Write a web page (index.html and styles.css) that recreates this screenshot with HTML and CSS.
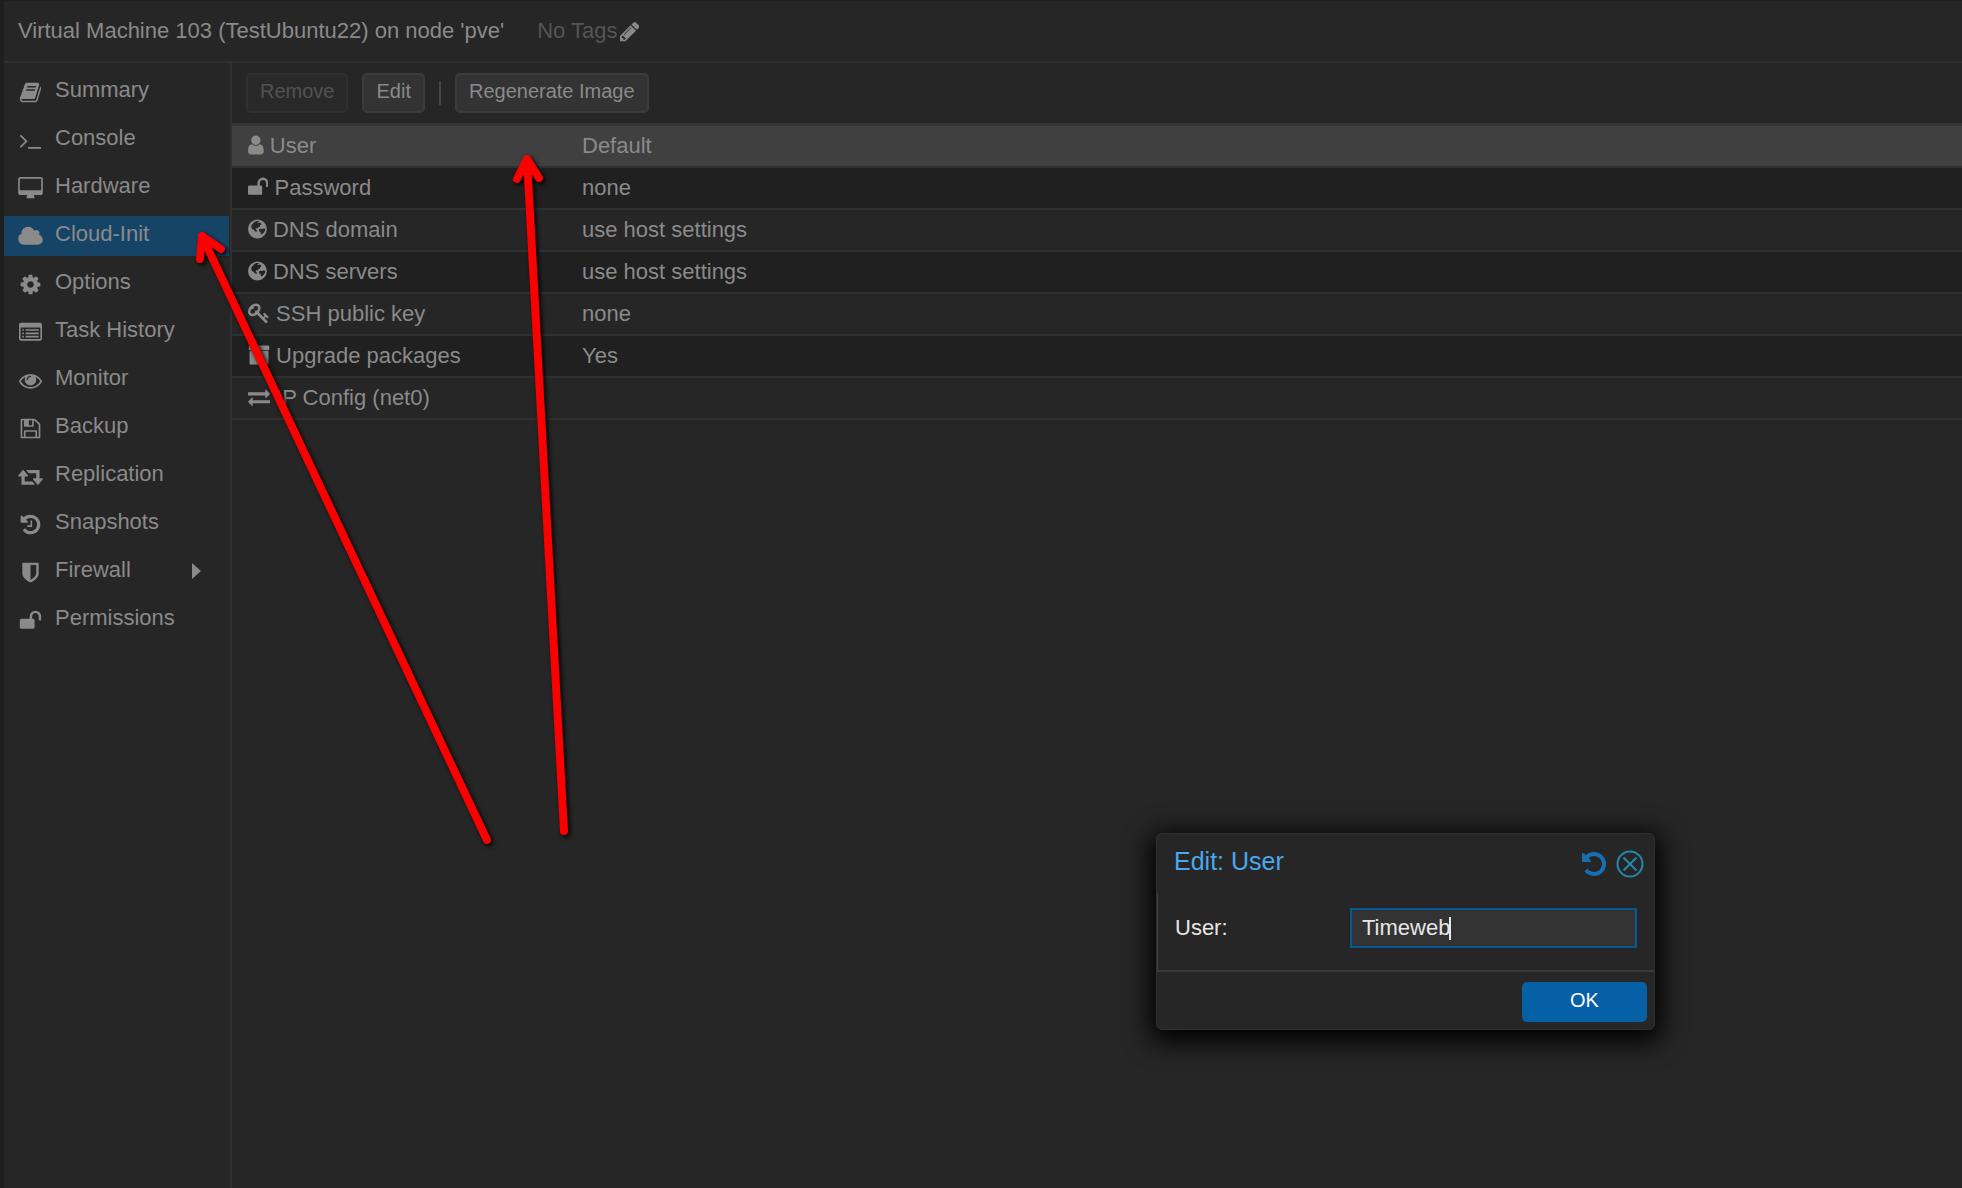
FILE: index.html
```html
<!DOCTYPE html>
<html lang="en">
<head>
    <meta charset="UTF-8">
    <meta name="viewport" content="width=device-width, initial-scale=1.0">
    <title>Virtual Machine 103 - Cloud-Init</title>
    <link rel="stylesheet" href="styles.css">
</head>
<body>
    <div class="panel">
        <header class="titlebar">
            <h1 class="vm-title">Virtual Machine 103 (TestUbuntu22) on node 'pve'</h1>
            <span class="tags">No Tags</span>
            <button class="tag-edit" aria-label="Edit tags">
                <svg class="icon" viewBox="128 0 1536 1792"><path d="M491 1536l91-91-235-235-91 91v107h128v128h107zm523-928q0-22-22-22-10 0-17 7l-542 542q-7 7-7 17 0 22 22 22 10 0 17-7l542-542q7-7 7-17zm-54-192l416 416-832 832h-416v-416zm683 96q0 53-37 90l-166 166-416-416 166-165q36-38 90-38 53 0 91 38l235 234q37 39 37 91z"/></svg>
            </button>
        </header>

        <div class="body">
            <!-- VM navigation -->
            <nav class="sidebar">
                <a class="nav-item" href="#summary">
                    <svg class="icon" viewBox="0 0 1792 1792"><path d="M1703 478q40 57 18 129l-275 906q-19 64-76.5 107.5t-122.5 43.5h-923q-77 0-148.5-53.5t-99.5-131.5q-24-67-2-127 0-4 3-27t4-37q1-8-3-21.5t-3-19.5q2-11 8-21t16.5-23.5 16.5-23.5q23-38 45-91.5t30-91.5q3-10 .5-30t-.5-28q3-11 17-28t17-23q21-36 42-92t25-90q1-9-2.5-32t.5-28q4-13 22-30.5t22-22.5q19-26 42.5-84.5t27.5-96.5q1-8-3-25.5t-2-26.5q2-8 9-18t18-23 17-21q8-12 16.5-30.5t15-35 16-36 19.5-32 26.5-23.5 36-11.5 47.5 5.5l-1 3q38-9 51-9h761q74 0 114 56t18 130l-274 906q-36 119-71.5 153.5t-128.5 34.5h-869q-27 0-38 15-11 16-1 43 24 70 144 70h923q29 0 56-15.5t35-41.5l300-987q7-22 5-57 38 15 59 43zm-1064 2q-4 13 2 22.5t20 9.5h608q13 0 25.5-9.5t16.5-22.5l21-64q4-13-2-22.5t-20-9.5h-608q-13 0-25.5 9.5t-16.5 22.5zm-83 256q-4 13 2 22.5t20 9.5h608q13 0 25.5-9.5t16.5-22.5l21-64q4-13-2-22.5t-20-9.5h-608q-13 0-25.5 9.5t-16.5 22.5z"/></svg>
                    <span>Summary</span>
                </a>
                <a class="nav-item" href="#console">
                    <svg class="icon" viewBox="0 0 1792 1792"><path d="M649 983l-466 466q-10 10-23 10t-23-10l-50-50q-10-10-10-23t10-23l393-393-393-393q-10-10-10-23t10-23l50-50q10-10 23-10t23 10l466 466q10 10 10 23t-10 23zm1079 457v64q0 14-9 23t-23 9h-960q-14 0-23-9t-9-23v-64q0-14 9-23t23-9h960q14 0 23 9t9 23z"/></svg>
                    <span>Console</span>
                </a>
                <a class="nav-item" href="#hardware">
                    <svg class="icon" viewBox="-64 0 1920 1792"><path d="M1728 992v-832q0-13-9.5-22.5t-22.5-9.5h-1600q-13 0-22.5 9.5t-9.5 22.5v832q0 13 9.5 22.5t22.5 9.5h1600q13 0 22.5-9.5t9.5-22.5zm128-832v1088q0 66-47 113t-113 47h-544q0 37 16 77.5t32 71 16 43.5q0 26-19 45t-45 19h-512q-26 0-45-19t-19-45q0-14 16-44t32-70 16-78h-544q-66 0-113-47t-47-113v-1088q0-66 47-113t113-47h1600q66 0 113 47t47 113z"/></svg>
                    <span>Hardware</span>
                </a>
                <a class="nav-item active" href="#cloudinit">
                    <svg class="icon" viewBox="64 0 1920 1792"><path d="M1984 1152q0 159-112.5 271.5t-271.5 112.5h-1088q-185 0-316.5-131.5t-131.5-316.5q0-132 71-241.5t187-163.5q-2-28-2-43 0-212 150-362t362-150q158 0 286.5 88t187.5 230q70-62 166-62 106 0 181 75t75 181q0 75-41 138 129 30 213 134.5t84 239.5z"/></svg>
                    <span>Cloud-Init</span>
                </a>
                <a class="nav-item" href="#options">
                    <svg class="icon" viewBox="0 0 1792 1792"><path d="M1152 896q0-106-75-181t-181-75-181 75-75 181 75 181 181 75 181-75 75-181zm512-109v222q0 12-8 23t-20 13l-185 28q-19 54-39 91 35 50 107 138 10 12 10 25t-9 23q-27 37-99 108t-94 71q-12 0-26-9l-138-108q-44 23-91 38-16 136-29 186-7 28-36 28h-222q-14 0-24.5-8.5t-11.5-21.5l-28-184q-49-16-90-37l-141 107q-10 9-25 9-14 0-25-11-126-114-165-168-7-10-7-23 0-12 8-23 15-21 51-66.5t54-70.5q-27-50-41-99l-183-27q-13-2-21-12.5t-8-23.5v-222q0-12 8-23t19-13l186-28q14-46 39-92-40-57-107-138-10-12-10-24 0-10 9-23 26-36 98.5-107.5t94.5-71.5q13 0 26 10l138 107q44-23 91-38 16-136 29-186 7-28 36-28h222q14 0 24.5 8.5t11.5 21.5l28 184q49 16 90 37l142-107q9-9 24-9 13 0 25 10 129 119 165 170 7 8 7 22 0 12-8 23-15 21-51 66.5t-54 70.5q26 50 41 98l183 28q13 2 21 12.5t8 23.5z"/></svg>
                    <span>Options</span>
                </a>
                <a class="nav-item" href="#tasks">
                    <svg class="icon" viewBox="0 0 1792 1792"><path fill-rule="evenodd" d="M160 128h1472a160 160 0 0 1 160 160v1088a160 160 0 0 1-160 160h-1472a160 160 0 0 1-160-160v-1088a160 160 0 0 1 160-160zM128 544v832q0 32 32 32h1472q32 0 32-32v-832q0-32-32-32h-1472q-32 0-32 32zM256 640h128v128h-128zM256 896h128v128h-128zM256 1152h128v128h-128zM512 640h1024v128h-1024zM512 896h1024v128h-1024zM512 1152h1024v128h-1024z"/></svg>
                    <span>Task History</span>
                </a>
                <a class="nav-item" href="#monitor">
                    <svg class="icon" viewBox="0 0 1792 1792"><path d="M1664 960q-152-236-381-353 61 104 61 225 0 185-131.5 316.5t-316.5 131.5-316.5-131.5-131.5-316.5q0-121 61-225-229 117-381 353 133 205 333.5 326.5t434.5 121.5 434.5-121.5 333.5-326.5zm-720-384q0-20-14-34t-34-14q-125 0-214.5 89.5t-89.5 214.5q0 20 14 34t34 14 34-14 14-34q0-86 61-147t147-61q20 0 34-14t14-34zm848 384q0 34-20 69-140 230-376.5 368.5t-499.5 138.5-499.5-139-376.5-368q-20-35-20-69t20-69q140-229 376.5-368t499.5-139 499.5 139 376.5 368q20 35 20 69z"/></svg>
                    <span>Monitor</span>
                </a>
                <a class="nav-item" href="#backup">
                    <svg class="icon" viewBox="0 0 1792 1792"><path d="M512 1536h768v-384h-768v384zm896 0h128v-896q0-14-10-38.5t-20-34.5l-281-281q-10-10-34-20t-39-10v416q0 40-28 68t-68 28h-576q-40 0-68-28t-28-68v-416h-128v1280h128v-416q0-40 28-68t68-28h832q40 0 68 28t28 68v416zm-384-928v-320q0-13-9.5-22.5t-22.5-9.5h-192q-13 0-22.5 9.5t-9.5 22.5v320q0 13 9.5 22.5t22.5 9.5h192q13 0 22.5-9.5t9.5-22.5zm640 32v928q0 40-28 68t-68 28h-1344q-40 0-68-28t-28-68v-1344q0-40 28-68t68-28h928q40 0 88 20t76 48l280 280q28 28 48 76t20 88z"/></svg>
                    <span>Backup</span>
                </a>
                <a class="nav-item" href="#replication">
                    <svg class="icon" viewBox="0 0 1920 1792"><path d="M1280 1504q0 13-9.5 22.5t-22.5 9.5h-960q-8 0-13.5-2t-9-7-5.5-8-3-11.5-1-11.5v-600h-192q-26 0-45-19t-19-45q0-24 15-41l320-384q19-22 49-22t49 22l320 384q15 17 15 41 0 26-19 45t-45 19h-192v384h576q16 0 25 11l160 192q7 10 7 21zm640-416q0 24-15 41l-320 384q-20 23-49 23t-49-23l-320-384q-15-17-15-41 0-26 19-45t45-19h192v-384h-576q-16 0-25-12l-160-192q-7-9-7-20 0-13 9.5-22.5t22.5-9.5h960q8 0 13.5 2t9 7 5.5 8 3 11.5 1 11.5v600h192q26 0 45 19t19 45z"/></svg>
                    <span>Replication</span>
                </a>
                <a class="nav-item" href="#snapshots">
                    <svg class="icon" viewBox="0 0 1792 1792"><path d="M1664 896q0 156-61 298t-164 245-245 164-298 61q-172 0-327-72.5t-264-204.5q-7-10-6.5-22.5t8.5-20.5l137-138q10-9 25-9 16 2 23 12 73 95 179 147t225 52q104 0 198.5-40.5t163.5-109.5 109.5-163.5 40.5-198.5-40.5-198.5-109.5-163.5-163.5-109.5-198.5-40.5q-98 0-188 35.5t-160 101.5l137 138q31 30 14 69-17 40-59 40h-448q-26 0-45-19t-19-45v-448q0-42 40-59 39-17 69 14l130 129q107-101 244.5-156.5t284.5-55.5q156 0 298 61t245 164 164 245 61 298zm-640-288v448q0 14-9 23t-23 9h-320q-14 0-23-9t-9-23v-64q0-14 9-23t23-9h224v-352q0-14 9-23t23-9h64q14 0 23 9t9 23z"/></svg>
                    <span>Snapshots</span>
                </a>
                <a class="nav-item" href="#firewall">
                    <svg class="icon" viewBox="0 0 1792 1792"><path d="M1344 960v-640h-448v1137q119-63 213-137 235-184 235-360zm192-768v768q0 86-33.5 170.5t-83 150-118 127.5-126.5 103-121 77.5-89.5 49.5-42.5 20q-12 6-26 6t-26-6q-16-7-42.5-20t-89.5-49.5-121-77.5-126.5-103-118-127.5-83-150-33.5-170.5v-768q0-26 19-45t45-19h1152q26 0 45 19t19 45z"/></svg>
                    <span>Firewall</span>
                    <svg class="expander" viewBox="0 0 9 16"><path d="M0 0l9 8-9 8z"/></svg>
                </a>
                <a class="nav-item" href="#permissions">
                    <svg class="icon" viewBox="0 0 1792 1792"><path d="M1728 576v256q0 26-19 45t-45 19h-64q-26 0-45-19t-19-45v-256q0-106-75-181t-181-75-181 75-75 181v192h96q40 0 68 28t28 68v576q0 40-28 68t-68 28h-960q-40 0-68-28t-28-68v-576q0-40 28-68t68-28h672v-192q0-185 131.5-316.5t316.5-131.5 316.5 131.5 131.5 316.5z"/></svg>
                    <span>Permissions</span>
                </a>
            </nav>

            <!-- Cloud-Init settings -->
            <main class="content">
                <div class="toolbar">
                    <button class="btn" disabled>Remove</button>
                    <button class="btn">Edit</button>
                    <span class="separator"></span>
                    <button class="btn">Regenerate Image</button>
                </div>

                <table class="grid">
                    <tbody>
                        <tr class="selected">
                            <th scope="row"><svg class="icon" viewBox="256 0 1280 1792"><path d="M1536 1399q0 109-62.5 187t-150.5 78h-854q-88 0-150.5-78t-62.5-187q0-85 8.5-160.5t31.5-152 58.5-131 94-89 134.5-34.5q131 128 313 128t313-128q76 0 134.5 34.5t94 89 58.5 131 31.5 152 8.5 160.5zm-256-887q0 159-112.5 271.5t-271.5 112.5-271.5-112.5-112.5-271.5 112.5-271.5 271.5-112.5 271.5 112.5 112.5 271.5z"/></svg> User</th>
                            <td>Default</td>
                        </tr>
                        <tr>
                            <th scope="row"><svg class="icon" viewBox="64 0 1664 1792"><path d="M1728 576v256q0 26-19 45t-45 19h-64q-26 0-45-19t-19-45v-256q0-106-75-181t-181-75-181 75-75 181v192h96q40 0 68 28t28 68v576q0 40-28 68t-68 28h-960q-40 0-68-28t-28-68v-576q0-40 28-68t68-28h672v-192q0-185 131.5-316.5t316.5-131.5 316.5 131.5 131.5 316.5z"/></svg> Password</th>
                            <td>none</td>
                        </tr>
                        <tr>
                            <th scope="row"><svg class="icon" viewBox="128 0 1536 1792"><use href="#globe"/></svg> DNS domain</th>
                            <td>use host settings</td>
                        </tr>
                        <tr>
                            <th scope="row"><svg class="icon" viewBox="128 0 1536 1792"><use href="#globe"/></svg> DNS servers</th>
                            <td>use host settings</td>
                        </tr>
                        <tr>
                            <th scope="row"><svg class="icon" viewBox="0 0 1792 1792"><path d="M832 512q0-80-56-136t-136-56-136 56-56 136q0 42 19 83-41-19-83-19-80 0-136 56t-56 136 56 136 136 56 136-56 56-136q0-42-19-83 41 19 83 19 80 0 136-56t56-136zm851 704q0 17-49 66t-66 49q-9 0-28.5-16t-36.5-33-38.5-40-24.5-26l-96 96 220 220q28 28 28 68 0 42-39 81t-81 39q-40 0-68-28l-671-671q-176 131-365 131-163 0-265.5-102.5t-102.5-265.5q0-160 95-313t248-248 313-95q163 0 265.5 102.5t102.5 265.5q0 189-131 365l355 355 96-96q-3-3-26-24.5t-40-38.5-33-36.5-16-28.5q0-17 49-66t66-49q13 0 23 10 6 6 46 44.5t82 79.5 86.5 86 73 78 28.5 41z"/></svg> SSH public key</th>
                            <td>none</td>
                        </tr>
                        <tr>
                            <th scope="row"><svg class="icon" viewBox="0 0 1792 1792"><path d="M1088 832q0-26-19-45t-45-19h-256q-26 0-45 19t-19 45 19 45 45 19h256q26 0 45-19t19-45zm576-192v960q0 26-19 45t-45 19h-1408q-26 0-45-19t-19-45v-960q0-26 19-45t45-19h1408q26 0 45 19t19 45zm64-448v256q0 26-19 45t-45 19h-1536q-26 0-45-19t-19-45v-256q0-26 19-45t45-19h1536q26 0 45 19t19 45z"/></svg> Upgrade packages</th>
                            <td>Yes</td>
                        </tr>
                        <tr>
                            <th scope="row"><svg class="icon" viewBox="0 0 1792 1792"><path d="M1792 1184v192q0 13-9.5 22.5t-22.5 9.5h-1376v192q0 13-9.5 22.5t-22.5 9.5q-12 0-24-10l-319-320q-9-9-9-22 0-14 9-23l320-320q9-9 23-9 13 0 22.5 9.5t9.5 22.5v192h1376q13 0 22.5 9.5t9.5 22.5zm0-544q0 14-9 23l-320 320q-9 9-23 9-13 0-22.5-9.5t-9.5-22.5v-192h-1376q-13 0-22.5-9.5t-9.5-22.5v-192q0-13 9.5-22.5t22.5-9.5h1376v-192q0-14 9-23t23-9q12 0 24 10l319 319q9 9 9 23z"/></svg> IP Config (net0)</th>
                            <td></td>
                        </tr>
                    </tbody>
                </table>
            </main>
        </div>
    </div>

    <!-- Edit window -->
    <form class="window" role="dialog" aria-labelledby="windowTitle">
        <div class="window-header">
            <h2 class="window-title" id="windowTitle">Edit: User</h2>
            <button type="reset" class="tool" aria-label="Reset">
                <svg class="tool-undo" viewBox="128 128 1536 1536"><path d="M1664 896q0 156-61 298t-164 245-245 164-298 61q-172 0-327-72.5t-264-204.5q-7-10-6.5-22.5t8.5-20.5l137-138q10-9 25-9 16 2 23 12 73 95 179 147t225 52q104 0 198.5-40.5t163.5-109.5 109.5-163.5 40.5-198.5-40.5-198.5-109.5-163.5-163.5-109.5-198.5-40.5q-98 0-188 35.5t-160 101.5l137 138q31 30 14 69-17 40-59 40h-448q-26 0-45-19t-19-45v-448q0-42 40-59 39-17 69 14l130 129q107-101 244.5-156.5t284.5-55.5q156 0 298 61t245 164 164 245 61 298z"/></svg>
            </button>
            <button type="button" class="tool" aria-label="Close">
                <svg class="tool-close" viewBox="0 0 28 28"><circle cx="14" cy="14" r="12.5"/><path d="M7.5 7.5l13 13M20.5 7.5l-13 13"/></svg>
            </button>
        </div>
        <div class="window-body">
            <label for="user">User:</label>
            <div class="field">
                <input type="text" id="user" value="Timeweb">
                <span class="caret"></span>
            </div>
        </div>
        <div class="window-footer">
            <button type="button" class="btn-ok">OK</button>
        </div>
    </form>

    <!-- Pointer arrows -->
    <svg class="arrows" width="600" height="860" viewBox="0 0 600 860">
        <path d="M487 840L202 236M200 259L202 236L221 249"/>
        <path d="M564 831L527 159M517 179L527 159L539 178"/>
    </svg>

    <svg class="defs" width="0" height="0">
        <defs>
            <path id="globe" fill-rule="evenodd" d="M896 128a768 768 0 1 1 0 1536a768 768 0 1 1 0-1536zM1000 250l-200 0-160 90-190 190-60 170 60 190 150 60 80 130 150 60 20-130-110-90 60-90 110 30 60-110 150-80-20-100 130-40-60-130-120-30-110 60-60-70 120-50zM1110 860l-90 110 20 130 110 20 30 160 60 60 150-120 120-190 30-150-150-30-130 40z"/>
        </defs>
    </svg>
</body>
</html>
```
FILE: styles.css
```css
* {
    margin: 0;
    padding: 0;
    box-sizing: border-box;
}

body {
    background-color: #1f1f1f;
    color: #8a8a8a;
    font-family: "Liberation Sans", Arial, Helvetica, sans-serif;
    font-size: 22px;
    line-height: 26px;
    overflow: hidden;
}

button,
input {
    font: inherit;
    color: inherit;
}

button {
    border: none;
    background: none;
    cursor: pointer;
}

.icon {
    height: 23px;
    fill: currentColor;
}

.panel {
    display: flex;
    flex-direction: column;
    min-height: 100vh;
    padding: 1px 0 0 4px;
}

/* Title bar */
.titlebar {
    display: flex;
    align-items: center;
    height: 62px;
    padding: 0 14px;
    background-color: #262626;
    border-bottom: 2px solid #303030;
}

.vm-title {
    font-size: 22px;
    font-weight: normal;
}

.tags {
    margin-left: 33px;
    color: #555;
}

.tag-edit {
    display: flex;
    margin-left: 2px;
}

.body {
    display: flex;
    flex: 1;
    background-color: #262626;
}

/* Sidebar */
.sidebar {
    display: flex;
    flex-direction: column;
    gap: 8px;
    width: 228px;
    padding: 9px 1px 0 0;
    border-right: 2px solid #303030;
}

.nav-item {
    display: flex;
    align-items: center;
    height: 40px;
    padding: 0 28px 0 14px;
    color: inherit;
    text-decoration: none;
}

.nav-item.active {
    background-color: #164467;
}

.nav-item .icon {
    width: 25px;
    margin-top: 1px;
}

.nav-item span {
    margin: 0 auto 4px 12px;
}

.expander {
    width: 9px;
    height: 16px;
    margin-bottom: 2px;
    fill: currentColor;
}

/* Toolbar */
.content {
    flex: 1;
}

.toolbar {
    display: flex;
    align-items: center;
    gap: 14px;
    height: 60px;
    padding: 0 14px;
}

.btn {
    height: 40px;
    padding: 0 12px 5px;
    background-color: #333;
    border: 2px solid #3b3b3b;
    border-radius: 5px;
    font-size: 20px;
}

.btn:disabled {
    background-color: #292929;
    border-color: #303030;
    color: #525252;
}

.separator {
    width: 2px;
    height: 24px;
    background-color: #444;
}

/* Settings grid */
.grid {
    width: 100%;
    border-collapse: collapse;
    border-top: 3px solid #363636;
}

.grid tr {
    height: 42px;
    border-bottom: 2px solid #303030;
}

.grid tr:nth-child(even) {
    background-color: #202020;
}

.grid tr.selected {
    background-color: #404040;
}

.grid th {
    width: 334px;
    padding-left: 16px;
    font-weight: normal;
    text-align: left;
}

.grid td {
    padding-left: 16px;
}

.grid .icon {
    height: 22px;
    vertical-align: -3px;
}

/* Edit window */
.window {
    position: absolute;
    top: 833px;
    left: 1156px;
    width: 499px;
    background-color: #262626;
    border: 1px solid #303030;
    border-radius: 6px;
    box-shadow: 0 6px 26px 6px #000;
    color: #e6e6e6;
}

.window-header {
    display: flex;
    align-items: center;
    height: 59px;
    padding: 0 10px 0 17px;
}

.window-title {
    margin: 0 auto 5px 0;
    font-size: 25px;
    font-weight: normal;
    color: #4aa8ee;
}

.tool {
    display: flex;
    margin-left: 10px;
}

.tool-undo {
    width: 24px;
    height: 24px;
    fill: #176fb3;
}

.tool-close {
    width: 28px;
    height: 28px;
    fill: none;
    stroke: #2688ad;
    stroke-width: 2;
}

.window-body {
    display: flex;
    align-items: center;
    height: 79px;
    padding: 0 17px 8px;
    border-left: 1px solid #404040;
    border-bottom: 2px solid #3a3a3a;
}

.window-body label {
    width: 175px;
}

.field {
    position: relative;
    flex: 1;
}

.field input {
    display: block;
    width: 100%;
    height: 40px;
    padding: 0 10px;
    background-color: #333;
    border: 2px solid #055a96;
    outline: none;
}

.caret {
    position: absolute;
    top: 9px;
    left: 99px;
    width: 2px;
    height: 23px;
    background-color: #e6e6e6;
}

.window-footer {
    display: flex;
    justify-content: flex-end;
    padding: 10px 7px 7px;
}

.btn-ok {
    width: 125px;
    height: 40px;
    padding-bottom: 5px;
    background-color: #0660a5;
    border-radius: 5px;
    color: #fff;
    font-size: 20px;
}

/* Pointer arrows */
.arrows {
    position: absolute;
    top: 0;
    left: 0;
    fill: none;
    stroke: #fa0000;
    stroke-width: 8;
    stroke-linecap: round;
    stroke-linejoin: round;
    filter: drop-shadow(2px 2px 2px #000);
    pointer-events: none;
}

.defs {
    position: absolute;
    top: 0;
}
```
